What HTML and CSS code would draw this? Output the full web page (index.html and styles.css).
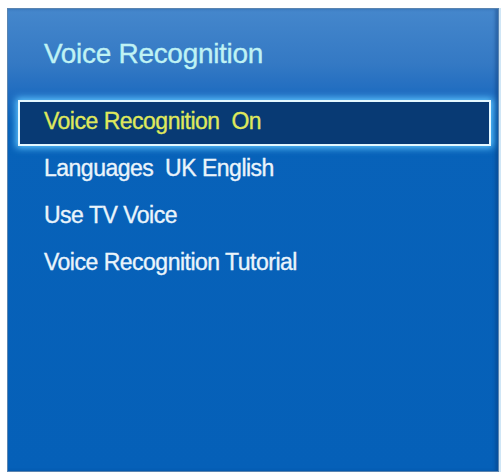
FILE: index.html
```html
<!DOCTYPE html>
<html>
<head>
<meta charset="utf-8">
<link rel="stylesheet" href="styles.css">
</head>
<body>
<div class="panel">
  <div class="title">Voice Recognition</div>
  <ul class="menu">
    <li class="item selected">Voice Recognition&nbsp; On</li>
    <li class="item">Languages&nbsp; UK English</li>
    <li class="item">Use TV Voice</li>
    <li class="item">Voice Recognition Tutorial</li>
  </ul>
</div>
</body>
</html>
```

FILE: styles.css
```css
html, body {
  margin: 0;
  padding: 0;
  background: #ffffff;
}
body {
  padding: 8px 0 0 7px;
  font-family: "Liberation Sans", Arial, sans-serif;
}
.panel {
  box-sizing: border-box;
  width: 492px;
  height: 464px;
  border: 1px solid #5a84b0;
  background: linear-gradient(to bottom, #4587cc 0px, #3479c4 55px, #1f6cc0 85px, #0862b9 115px, #0560b8 100%);
  box-shadow: inset -3px 0 3px rgba(10, 50, 110, 0.35), 2px 0 0 #cfe6f6;
  overflow: hidden;
}
.title {
  margin: 30px 0 0 36px;
  font-size: 28px;
  line-height: 30px;
  letter-spacing: -0.3px;
  color: #bff2f4;
  -webkit-text-stroke: 0.35px #bff2f4;
}
.menu {
  list-style: none;
  margin: 31px 7px 0 10px;
  padding: 0;
}
.item {
  height: 47px;
  box-sizing: border-box;
  padding-left: 26px;
  font-size: 23px;
  line-height: 42px;
  letter-spacing: -0.5px;
  color: #eaf4fb;
  -webkit-text-stroke: 0.35px #eaf4fb;
  white-space: nowrap;
}
.item.selected {
  height: 46px;
  margin-bottom: 1px;
  padding-left: 24px;
  line-height: 38px;
  padding-bottom: 4px;
  border: 2px solid #e4f8ff;
  background: #083a74;
  color: #dfe85c;
  -webkit-text-stroke: 0.35px #dfe85c;
  box-shadow: 0 0 7px 2px #5fc6ff;
}
```
